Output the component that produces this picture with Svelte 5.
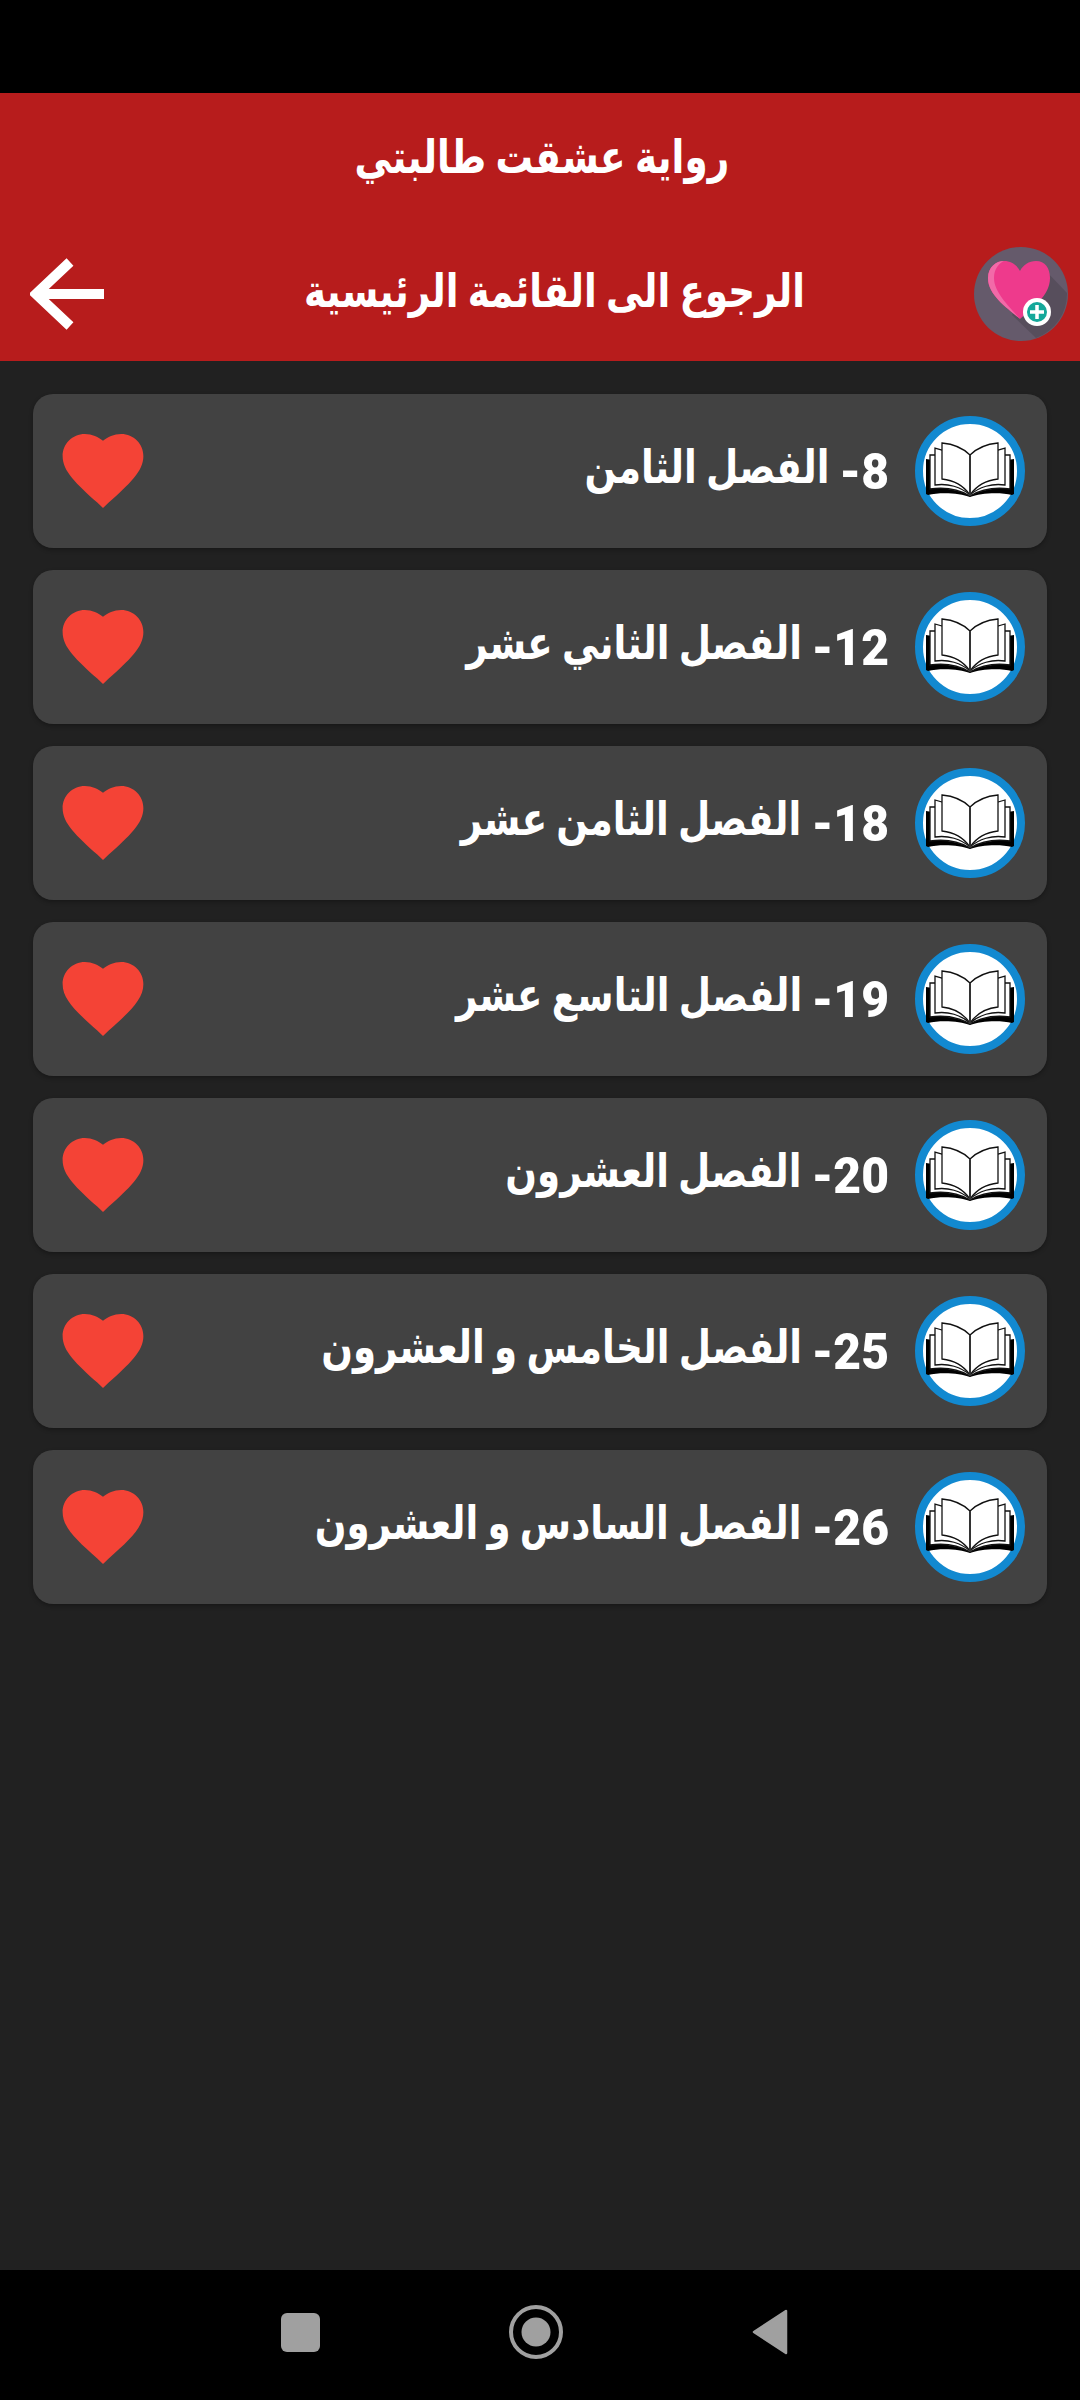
<script>
  const chapters = [
    { num: "8-", name: "الفصل الثامن" },
    { num: "12-", name: "الفصل الثاني عشر" },
    { num: "18-", name: "الفصل الثامن عشر" },
    { num: "19-", name: "الفصل التاسع عشر" },
    { num: "20-", name: "الفصل العشرون" },
    { num: "25-", name: "الفصل الخامس و العشرون" },
    { num: "26-", name: "الفصل السادس و العشرون" },
  ];
</script>

<div class="page">
  <div class="status"></div>

  <header>
    <h1>رواية عشقت طالبتي</h1>
    <div class="back-row">
      <svg class="arrow" viewBox="0 0 76 72" width="76" height="72">
        <path d="M40 4 L6 36 L40 68 M6 36 H74" fill="none" stroke="#fff" stroke-width="10" />
      </svg>
      <h2>الرجوع الى القائمة الرئيسية</h2>
      <svg class="fav" viewBox="0 0 94 94" width="94" height="94">
        <circle cx="47" cy="47" r="47" fill="#655a6b" />
        <path d="M70 22 L93 46 A47 47 0 0 1 62 91 L38 68 Z" fill="#574e5c" />
        <path d="M46 72 C34 61 14 49 14 31 C14 20 22 14 30 14 C37 14 43 18 46 24 C49 18 55 14 62 14 C71 14 76 21 76 31 C76 49 58 61 46 72 Z" fill="#ee3a8c" />
        <path d="M30 14 C22 14 14 20 14 31 C14 49 34 61 46 72 C36 60 20 46 20 31 C20 22 25 16 30 14 Z" fill="#f26aa8" />
        <circle cx="63" cy="65" r="14" fill="#fff" />
        <circle cx="63" cy="65" r="10" fill="#14a89a" />
        <path d="M63 58 V72 M56 65 H70" stroke="#fff" stroke-width="3.5" />
      </svg>
    </div>
  </header>

  <main>
    {#each chapters as chapter}
      <div class="card">
        <svg class="book" viewBox="0 0 110 110" width="110" height="110">
          <circle cx="55" cy="55" r="51" fill="#fff" stroke="#1289d0" stroke-width="8" />
          <path d="M11 43 L55 50 L99 43 V78 L97 79 C85 76 65 77 55 81 C45 77 25 76 13 79 L11 78 Z" fill="#000" />
          <g fill="#fff" stroke="#111" stroke-width="1.3">
            <path d="M15 39 V73 C30 71 45 74 55 80 C65 74 80 71 95 73 V39 Z" />
            <path d="M20 32 V69 C33 67 46 71 55 79 C64 71 77 67 90 69 V32 L55 42 Z" />
            <path d="M27 27 V63 C37 64 48 69 55 79 C62 69 73 64 83 63 V27 C72 28 62 32 55 39 C48 32 38 28 27 27 Z" />
          </g>
          <path d="M55 39 V80" stroke="#333" stroke-width="2" />
        </svg>
        <div class="title">
          <span class="num">{chapter.num}</span>
          <span class="name">{chapter.name}</span>
        </div>
        <svg class="heart" viewBox="0 0 24 22" width="82" height="74">
          <path d="M12 22 L10.3 20.4 C4.1 14.8 0 11.1 0 6.6 C0 2.9 2.9 0 6.6 0 C8.7 0 10.7 1 12 2 C13.3 1 15.3 0 17.4 0 C21.1 0 24 2.9 24 6.6 C24 11.1 19.9 14.8 13.7 20.4 Z" fill="#f44336" />
        </svg>
      </div>
    {/each}
  </main>

  <nav>
    <span class="square"></span>
    <svg viewBox="0 0 54 54" width="54" height="54">
      <circle cx="27" cy="27" r="25" fill="none" stroke="#a0a0a0" stroke-width="4" />
      <circle cx="27" cy="27" r="14.5" fill="#a0a0a0" />
    </svg>
    <svg viewBox="0 0 36 46" width="36" height="46">
      <path d="M2 23 L34 2 V44 Z" fill="#a0a0a0" stroke="#a0a0a0" stroke-width="2.5" stroke-linejoin="round" />
    </svg>
  </nav>
</div>

<style>
  :global(body) {
    margin: 0;
    background: #212121;
    font-family: Roboto, "DejaVu Sans", sans-serif;
  }

  .page {
    display: flex;
    flex-direction: column;
    height: 2400px;
    width: 1080px;
  }

  .status {
    height: 93px;
    background: #000;
  }

  header {
    height: 268px;
    background: #b71c1c;
    color: #fff;
    box-sizing: border-box;
  }

  h1 {
    margin: 0;
    height: 130px;
    line-height: 130px;
    padding-left: 4px;
    text-align: center;
    font-size: 40px;
    font-weight: 700;
    transform: scale(0.935, 1.15);
  }

  .back-row {
    display: flex;
    align-items: center;
    padding: 24px 12px 0 30px;
  }

  .arrow {
    flex: none;
  }

  h2 {
    flex: 1;
    margin: 0 0 6px;
    padding-left: 31px;
    text-align: center;
    font-size: 40px;
    font-weight: 700;
    transform: scale(0.93, 1.15);
  }

  .fav {
    flex: none;
  }

  main {
    flex: 1;
    display: flex;
    flex-direction: column;
    gap: 22px;
    padding: 33px 33px 0;
  }

  .card {
    direction: rtl;
    display: flex;
    align-items: center;
    height: 154px;
    padding: 0 22px 0 29px;
    box-sizing: border-box;
    background: #424242;
    border-radius: 20px;
    box-shadow: 0 2px 4px rgba(0, 0, 0, 0.3);
  }

  .book {
    flex: none;
  }

  .title {
    flex: 1;
    display: flex;
    align-items: center;
    gap: 10px;
    margin-right: 26px;
    color: #fff;
    font-weight: 700;
  }

  .num {
    font-size: 48px;
    font-weight: 900;
    transform: scaleY(1.05);
  }

  .name {
    font-size: 40px;
    margin-bottom: 8px;
    transform: scale(0.93, 1.15);
    transform-origin: right center;
  }

  .heart {
    flex: none;
  }

  nav {
    height: 130px;
    background: #000;
    display: flex;
    align-items: center;
    padding-left: 281px;
    padding-bottom: 6px;
    box-sizing: border-box;
  }

  nav svg {
    flex: none;
    margin-left: 189px;
  }

  .square {
    width: 39px;
    height: 39px;
    background: #a0a0a0;
    border-radius: 6px;
  }
</style>
